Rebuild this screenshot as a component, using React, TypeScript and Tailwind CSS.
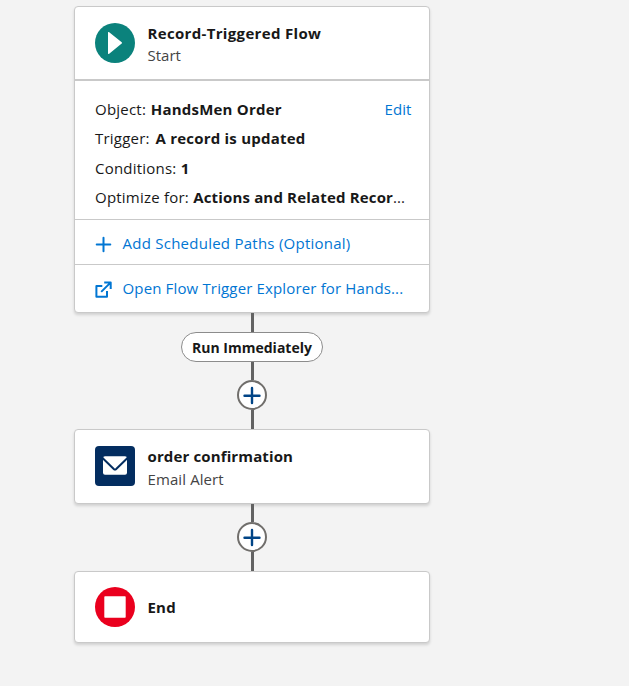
import type { ReactNode } from 'react';

const card = 'w-[356px] shrink-0 rounded border border-[#c9c9c9] bg-white shadow-[0_2px_3px_0_rgba(0,0,0,0.14)]';

function Connector({ className }: { className: string }) {
  return <div className={`ml-px w-[3px] shrink-0 bg-[#626262] ${className}`} />;
}

function AddButton() {
  return (
    <button className="flex h-[30px] w-[30px] shrink-0 items-center justify-center rounded-full border-2 border-[#706e6b] bg-white">
      <svg width="26" height="26" viewBox="0 0 26 26" fill="none" stroke="#014486" strokeWidth="2.4" strokeLinecap="round">
        <path d="M13 6v15M5.5 13.7h15" />
      </svg>
    </button>
  );
}

function Row({ label, children }: { label: string; children: ReactNode }) {
  return (
    <div className="flex h-[29.35px] items-center whitespace-pre leading-[22px]">
      <span className="tracking-[0.22px]">{label}</span>
      {children}
    </div>
  );
}

export default function App() {
  return (
    <main className="h-[686px] w-[629px] overflow-hidden bg-[#f3f3f3] pl-[74px] pt-1.5 font-['Open_Sans','Noto_Sans',sans-serif] text-[15px] text-[#181818]">
      <div className="flex w-[356px] flex-col items-center">
        <section className={`h-[307px] ${card}`}>
          <header className="flex h-[74px] items-center border-b-2 border-[#c9c9c9] pl-5">
            <svg width="40" height="40" viewBox="0 0 40 40">
              <circle cx="20" cy="20" r="20" fill="#0b827c" />
              <path d="M13 9.4c0-.5.5-.7.9-.3l12.8 10.2c.5.4.5.9 0 1.3L13.9 30.9c-.4.4-.9.1-.9-.3z" fill="white" />
            </svg>
            <div className="ml-[12.5px] whitespace-nowrap pt-0.5 leading-[22px]">
              <h1 className="font-bold tracking-[0.33px]">Record-Triggered Flow</h1>
              <p className="text-[#444]">Start</p>
            </div>
          </header>
          <div className="h-[139px] border-b border-[#c9c9c9] pl-5 pt-[13.4px]">
            <Row label="Object: ">
              <b className="ml-[0.5px] tracking-[0.22px]">HandsMen Order</b>
              <a className="ml-auto mr-[17.5px] tracking-[0.1px] text-[#0176d3]">Edit</a>
            </Row>
            <Row label="Trigger:  "><b className="-ml-[2.5px] tracking-[0.22px]">A record is updated</b></Row>
            <Row label="Conditions: "><b>1</b></Row>
            <Row label="Optimize for: "><b className="tracking-[0.17px]">Actions and Related Recor</b><span>...</span></Row>
          </div>
          <div className="flex h-[45px] items-center border-b border-[#c9c9c9] pl-5 text-[#0176d3]">
            <svg className="mt-[5px]" width="17" height="17" viewBox="0 0 17 17" fill="none" stroke="currentColor" strokeWidth="2" strokeLinecap="round">
              <path d="M8.5 1.7v13.6M1.7 8.5h13.6" />
            </svg>
            <span className="ml-[10.5px] mt-0.5 whitespace-nowrap tracking-[0.25px]">Add Scheduled Paths (Optional)</span>
          </div>
          <div className="flex h-[47px] items-center pl-5 text-[#0176d3]">
            <svg className="mt-0.5" width="17" height="17" viewBox="0 0 17 17" fill="none" stroke="currentColor" strokeWidth="2">
              <path d="M7.3 5H1.4v10.8H12V10M9.2 1.4h6.5V8M15.5 1.6 6.2 10.9" strokeLinejoin="round" />
            </svg>
            <span className="ml-[10.5px] whitespace-nowrap tracking-[0.15px]">Open Flow Trigger Explorer for Hands...</span>
          </div>
        </section>
        <Connector className="h-[19px]" />
        <div className="flex h-[30px] w-[142px] shrink-0 items-center justify-center rounded-full border border-[#8c8c8c] bg-white text-[14px] font-bold">
          Run Immediately
        </div>
        <Connector className="h-[18px]" />
        <AddButton />
        <Connector className="h-[19px]" />
        <section className={`flex h-[75px] items-center pl-5 ${card}`}>
          <svg className="-mt-px" width="40" height="40" viewBox="0 0 40 40">
            <rect width="40" height="40" rx="4" fill="#032d60" />
            <rect x="8" y="10.3" width="24" height="18.4" rx="2" fill="white" />
            <path d="m7.5 12 11.3 10.9q1.2 1.1 2.4 0L32.5 12" fill="none" stroke="#032d60" strokeWidth="2" />
          </svg>
          <div className="ml-[12.5px] whitespace-nowrap pt-0.5">
            <h2 className="font-bold leading-[23px] tracking-[0.13px]">order confirmation</h2>
            <p className="leading-[23px] text-[#444] tracking-[0.1px]">Email Alert</p>
          </div>
        </section>
        <Connector className="h-[18px]" />
        <AddButton />
        <Connector className="h-[19px]" />
        <section className={`flex h-[72px] items-center pl-5 ${card}`}>
          <svg width="40" height="40" viewBox="0 0 40 40">
            <circle cx="20" cy="20" r="20" fill="#ea001e" />
            <rect x="9.3" y="9.3" width="21.4" height="21.4" rx=".7" fill="white" />
          </svg>
          <h2 className="ml-[12.5px] font-bold tracking-[0.2px]">End</h2>
        </section>
      </div>
    </main>
  );
}
